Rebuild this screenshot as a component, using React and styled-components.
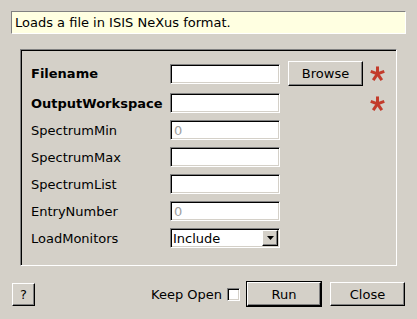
import React from 'react';
import styled, { createGlobalStyle, css } from 'styled-components';

const Global = createGlobalStyle`
  html, body { margin: 0; padding: 0; background: #d4d0c8; }
  body { font-family: "DejaVu Sans", "Liberation Sans", sans-serif; font-size: 13px; color: #000; }
  * { box-sizing: border-box; }
`;

const sunken = css`
  border: 1px solid;
  border-color: #808080 #ffffff #ffffff #808080;
  box-shadow: inset 1px 1px 0 #000000, inset -1px -1px 0 #d4d0c8;
`;

const raised = css`
  border: 1px solid;
  border-color: #ffffff #000000 #000000 #ffffff;
  box-shadow: inset -1px -1px 0 #808080;
  background: #d4d0c8;
`;

const Page = styled.div`
  width: 417px;
  height: 319px;
  padding: 11px 11px 0;
  display: flex;
  flex-direction: column;
`;

const Description = styled.div`
  height: 23px;
  background: #ffffe1;
  border: 1px solid;
  border-color: #808080 #ffffff #ffffff #808080;
  padding: 0 3px;
  display: flex;
  align-items: center;
  white-space: nowrap;
`;

const Group = styled.div`
  margin: 15px 9px 0;
  height: 217px;
  ${sunken};
  padding: 11px 0 0 10px;
`;

const Form = styled.div`
  display: grid;
  grid-template-columns: 131px 110px 75px 22px;
  grid-template-rows: 25px repeat(6, 20px);
  column-gap: 8px;
  row-gap: 7px;
  align-items: center;
`;

const Label = styled.div`
  font-weight: ${p => (p.$bold ? 'bold' : 'normal')};
  white-space: nowrap;
  grid-column: 1;
`;

const Field = styled.input`
  grid-column: 2;
  width: 110px;
  height: 20px;
  ${sunken};
  background: #ffffff;
  font: inherit;
  color: #a0a0a0;
  padding: 0 3px;
  margin: 0;
  outline: none;
`;

const Button = styled.button`
  ${raised};
  width: ${p => p.$w || 75}px;
  height: ${p => p.$h || 24}px;
  font: inherit;
  color: #000;
  padding: 0;
  margin: 0;
  display: flex;
  align-items: center;
  justify-content: center;
`;

const BrowseButton = styled(Button)`
  grid-column: 3;
`;

const StarCell = styled.div`
  grid-column: 4;
  display: flex;
  align-items: center;
  margin-left: -1px;
`;

const Combo = styled.div`
  grid-column: 2;
  width: 110px;
  height: 20px;
  ${sunken};
  background: #ffffff;
  display: flex;
  align-items: center;
  padding: 1px 1px 1px 2px;
`;

const ComboText = styled.span`
  flex: 1;
`;

const ComboArrow = styled.div`
  ${raised};
  width: 16px;
  height: 16px;
  display: flex;
  align-items: center;
  justify-content: center;
`;

const Footer = styled.div`
  margin-top: 15px;
  height: 26px;
  display: flex;
  align-items: center;
  padding: 0 1px;
`;

const Spacer = styled.div`
  flex: 1;
`;

const CheckLabel = styled.span`
  margin-right: 5px;
`;

const CheckBox = styled.div`
  width: 13px;
  height: 13px;
  ${sunken};
  background: #ffffff;
  margin-right: 6px;
`;

const DefaultFrame = styled.div`
  border: 1px solid #000;
  margin-right: 8px;
  display: flex;
`;

const Star = () => (
  <svg width="15" height="15" viewBox="0 0 16 16">
    <g stroke="#c33b2b" strokeWidth="3.2" strokeLinecap="butt">
      <line x1="8" y1="8.5" x2="8" y2="0.5" />
      <line x1="8" y1="8.5" x2="15.2" y2="5.8" />
      <line x1="8" y1="8.5" x2="12.6" y2="15" />
      <line x1="8" y1="8.5" x2="3.4" y2="15" />
      <line x1="8" y1="8.5" x2="0.8" y2="5.8" />
    </g>
  </svg>
);

const Arrow = () => (
  <svg width="7" height="4" viewBox="0 0 7 4">
    <path d="M0 0 H7 L3.5 4 Z" fill="#000" />
  </svg>
);

export default function App() {
  return (
    <>
      <Global />
      <Page>
        <Description>Loads a file in ISIS NeXus format.</Description>
        <Group>
          <Form>
            <Label $bold>Filename</Label>
            <Field readOnly defaultValue="" />
            <BrowseButton $w={75} $h={25}>Browse</BrowseButton>
            <StarCell><Star /></StarCell>

            <Label $bold>OutputWorkspace</Label>
            <Field readOnly defaultValue="" />
            <StarCell><Star /></StarCell>

            <Label>SpectrumMin</Label>
            <Field readOnly defaultValue="0" />

            <Label>SpectrumMax</Label>
            <Field readOnly defaultValue="" />

            <Label>SpectrumList</Label>
            <Field readOnly defaultValue="" />

            <Label>EntryNumber</Label>
            <Field readOnly defaultValue="0" />

            <Label>LoadMonitors</Label>
            <Combo>
              <ComboText>Include</ComboText>
              <ComboArrow><Arrow /></ComboArrow>
            </Combo>
          </Form>
        </Group>
        <Footer>
          <Button $w={23} $h={23}>?</Button>
          <Spacer />
          <CheckLabel>Keep Open</CheckLabel>
          <CheckBox />
          <DefaultFrame>
            <Button $w={74} $h={24}>Run</Button>
          </DefaultFrame>
          <Button $w={75} $h={24}>Close</Button>
        </Footer>
      </Page>
    </>
  );
}
